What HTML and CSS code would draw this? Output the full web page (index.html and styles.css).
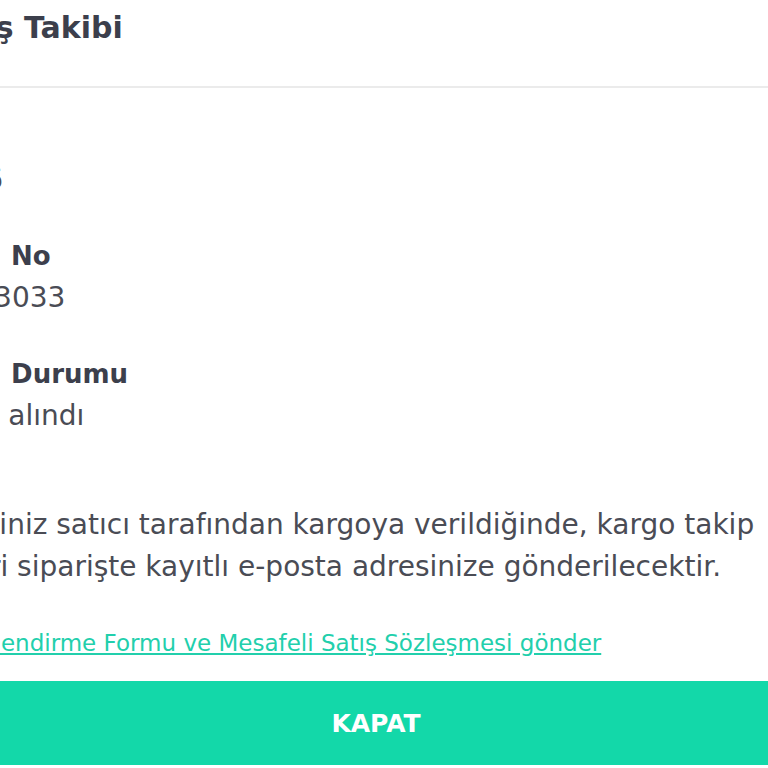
FILE: index.html
```html
<!DOCTYPE html>
<html lang="tr">
<head>
    <meta charset="UTF-8">
    <meta name="viewport" content="width=device-width, initial-scale=1.0">
    <title>Sipariş Takibi</title>
    <link rel="stylesheet" href="styles.css">
</head>
<body>
    <div class="modal">
        <div class="modal-header">
            <p class="title">Sipariş Takibi</p>
        </div>
        <div class="modal-body">
            <div class="field">
                <p class="label">Tarih</p>
                <p class="value">9.2016</p>
            </div>
            <div class="field">
                <p class="label">Sipariş No</p>
                <p class="value">105833033</p>
            </div>
            <div class="field">
                <p class="label">Sipariş Durumu</p>
                <p class="value">Sipariş alındı</p>
            </div>
            <p class="info">Siparişiniz satıcı tarafından kargoya verildiğinde, kargo takip bilgileri siparişte kayıtlı e-posta adresinize gönderilecektir.</p>
            <a class="send-link" href="#">Ön Bilgilendirme Formu ve Mesafeli Satış Sözleşmesi gönder</a>
        </div>
        <button class="close-btn">KAPAT</button>
    </div>
</body>
</html>
```

FILE: styles.css
```css
html, body {
    margin: 0;
    overflow: hidden;
    background-color: #fff;
}
p {
    margin: 0;
}
.modal {
    width: 942px;
    margin-left: -95px;
    font-family: "DejaVu Sans", sans-serif;
    color: #3c3f4c;
}
.modal-header {
    height: 86px;
    border-bottom: 2px solid #ebebeb;
}
.title {
    margin-left: -8px;
    font-size: 30px;
    font-weight: 700;
    line-height: 40px;
    padding-top: 8px;
}
.modal-body {
    display: flex;
    flex-direction: column;
    align-items: flex-start;
    padding-top: 29px;
}
.field {
    margin-bottom: 34px;
}
.label {
    margin-left: -9px;
    font-size: 26px;
    font-weight: 700;
    line-height: 42px;
    word-spacing: 5px;
}
.value {
    font-size: 28px;
    line-height: 42px;
    color: #4a4c55;
}
.field:last-of-type {
    margin-bottom: 67px;
}
.info {
    font-size: 28px;
    line-height: 42px;
    color: #4a4c55;
    max-width: 900px;
}
.send-link {
    margin-top: 34px;
    font-size: 23px;
    line-height: 42px;
    color: #22cfac;
    text-decoration: underline;
}
.close-btn {
    display: block;
    width: 100%;
    height: 84px;
    margin-top: 17px;
    border: none;
    background-color: #13d8a9;
    color: #fff;
    font-family: "DejaVu Sans", sans-serif;
    font-size: 25px;
    font-weight: 700;
}
```
